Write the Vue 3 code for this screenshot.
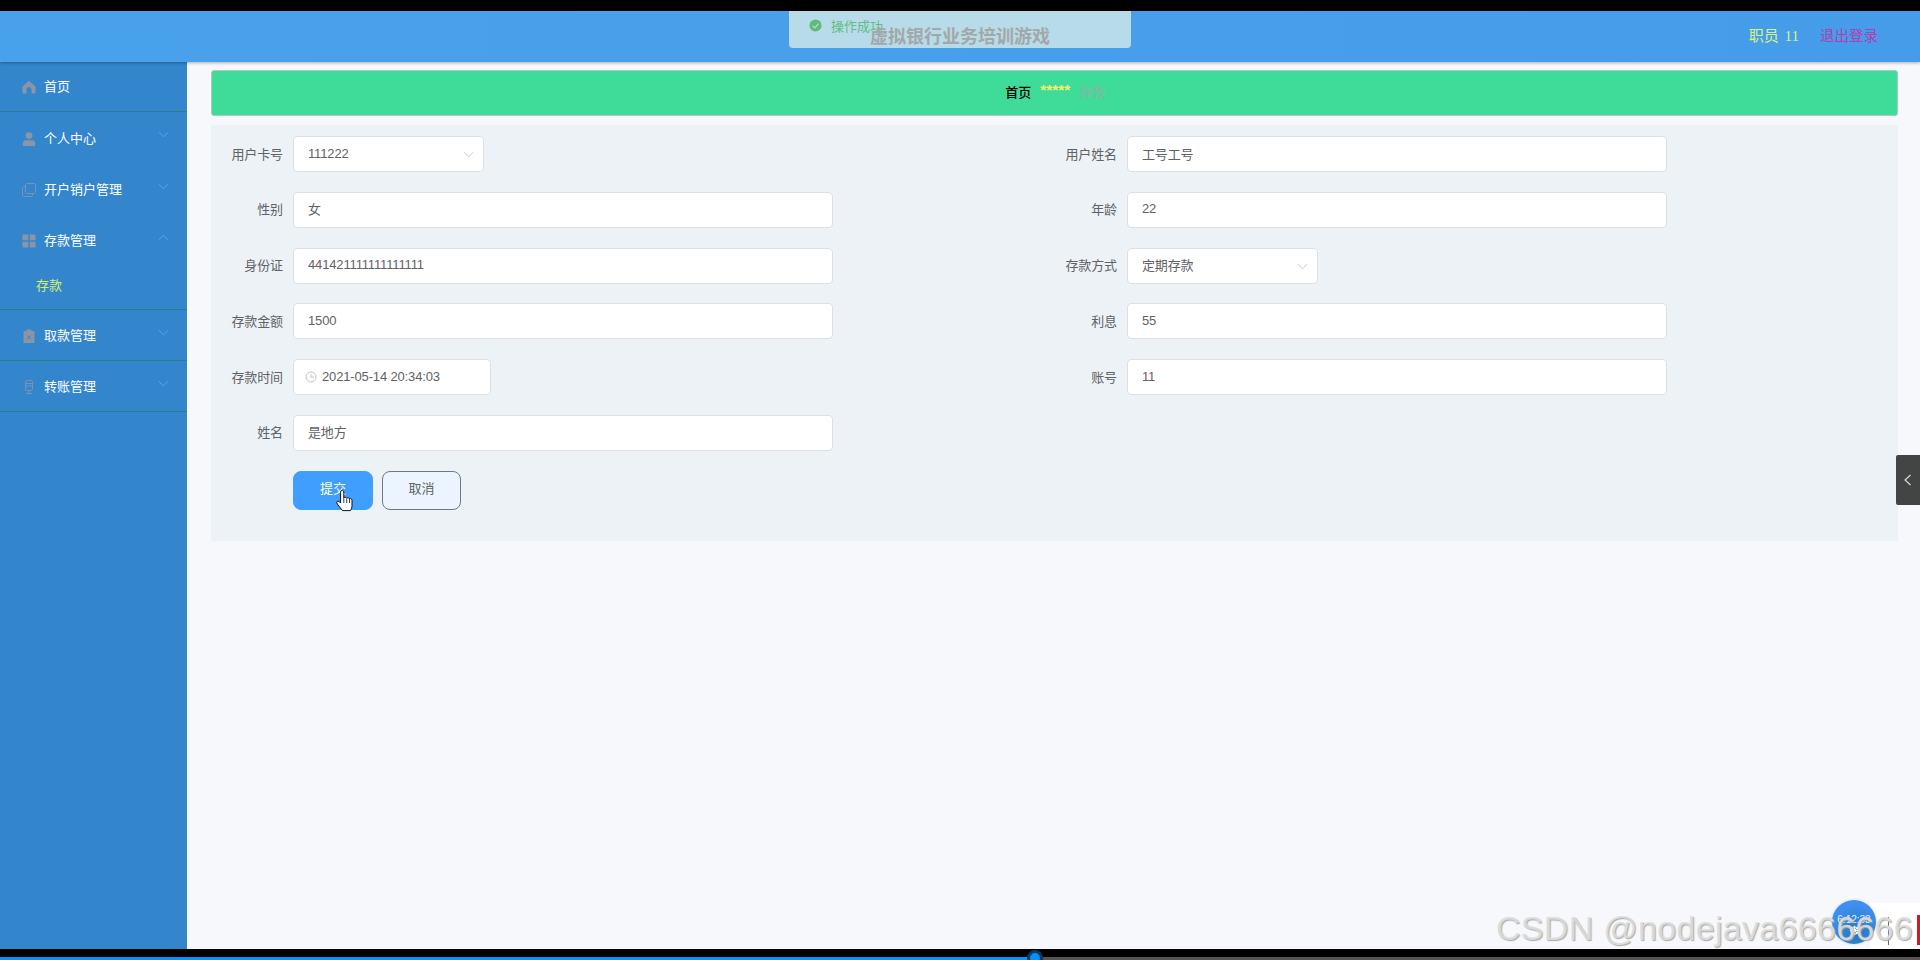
<script setup>
const chevron = 'M2 4.5 L7 9.5 L12 4.5'
const menu = [
  { key: 'home', label: '首页', cls: 'first', line: true },
  { key: 'user', label: '个人中心', arrow: 'down', cls: 'a' },
  { key: 'copy', label: '开户销户管理', arrow: 'down', cls: 'b' },
  { key: 'grid', label: '存款管理', arrow: 'up', cls: 'b' },
  { key: 'sub', label: '存款', cls: 'sub', line: true },
  { key: 'clip', label: '取款管理', arrow: 'down', cls: 'b', line: true },
  { key: 'mic', label: '转账管理', arrow: 'down', cls: 'b', line: true }
]
const rows = [
  [{ label: '用户卡号', value: '111222', type: 'select' }, { label: '用户姓名', value: '工号工号' }],
  [{ label: '性别', value: '女' }, { label: '年龄', value: '22' }],
  [{ label: '身份证', value: '441421111111111111' }, { label: '存款方式', value: '定期存款', type: 'select' }],
  [{ label: '存款金额', value: '1500' }, { label: '利息', value: '55' }],
  [{ label: '存款时间', value: '2021-05-14 20:34:03', type: 'date' }, { label: '账号', value: '11' }],
  [{ label: '姓名', value: '是地方' }, null]
]
</script>

<template>
  <div class="screen">
    <div class="black-top"></div>
    <header class="topbar">
      <div class="title">虚拟银行业务培训游戏</div>
      <div class="user">
        <span class="staff">职员 11</span>
        <span class="logout">退出登录</span>
      </div>
    </header>
    <div class="middle">
      <aside class="side">
        <div v-for="m in menu" :key="m.key" class="item" :class="[m.cls, { line: m.line }]">
          <svg v-if="m.key === 'home'" class="ico" viewBox="0 0 14 14"><path d="M7 .8 13.500 6.500V13.500H9.500V9.500A2.500 2.500 0 0 0 4.500 9.500V13.500H.5V6.500z" fill="#8b95a5" /></svg>
          <svg v-else-if="m.key === 'user'" class="ico" viewBox="0 0 14 14"><circle cx="7" cy="3.600" r="3.400" fill="#8b95a5" /><path d="M.8 14v-2.400C.8 9.500 2.200 8.300 4 8.300h6c1.800 0 3.200 1.200 3.200 3.300V14z" fill="#8b95a5" /></svg>
          <svg v-else-if="m.key === 'copy'" class="ico" viewBox="0 0 14 14" fill="none" stroke="#7b92b2" stroke-width="1"><rect x="3.500" y=".5" width="10" height="10" rx="1" /><path d="M3 3.500H1.500a1 1 0 0 0-1 1v8a1 1 0 0 0 1 1h8a1 1 0 0 0 1-1V11" /></svg>
          <svg v-else-if="m.key === 'grid'" class="ico" viewBox="0 0 14 14" fill="#8b95a5"><rect x=".5" y=".5" width="5.800" height="5.800" /><rect x="7.700" y=".5" width="5.800" height="5.800" /><rect x=".5" y="7.700" width="5.800" height="5.800" /><rect x="7.700" y="7.700" width="5.800" height="5.800" /></svg>
          <svg v-else-if="m.key === 'clip'" class="ico" viewBox="0 0 14 14"><path d="M1.500 2H4.500V.5H9.500V2H12.500V14H1.500z" fill="#8b95a5" /><path d="M5 6.500 9 10.500M9 6.500 5 10.500" stroke="#3385cc" stroke-width="1" /></svg>
          <svg v-else-if="m.key === 'mic'" class="ico" viewBox="0 0 14 14" fill="none" stroke="#7b92b2" stroke-width="1"><rect x="3.500" y=".5" width="7" height="10" rx="1.500" /><path d="M3.500 3.500h7M3.500 6h7M7 10.500v2.500M4 13.500h6" /></svg>
          <span class="label">{{ m.label }}</span>
          <svg v-if="m.arrow" class="chev" :class="m.arrow" viewBox="0 0 14 14" fill="none" stroke="#6fa5d8" stroke-width="1"><path :d="chevron" /></svg>
        </div>
      </aside>
      <main class="content">
        <div class="crumb">
          <span class="crumb-home">首页</span>
          <span class="stars">*****</span>
          <span class="crumb-cur">存款</span>
        </div>
        <section class="panel">
          <div class="grid">
            <template v-for="(row, i) in rows" :key="i">
              <div v-for="(f, j) in row" :key="j" class="field">
                <template v-if="f">
                  <label class="flabel">{{ f.label }}</label>
                  <div class="box" :class="f.type">
                    <svg v-if="f.type === 'date'" class="clock" viewBox="0 0 14 14" fill="none" stroke="#c0c4cc" stroke-width="1"><circle cx="7" cy="7" r="5" /><path d="M7 3.800V7H10" /></svg>
                    <span>{{ f.value }}</span>
                    <svg v-if="f.type === 'select'" class="sel-arrow" viewBox="0 0 14 14" fill="none" stroke="#c0c4cc" stroke-width="1"><path :d="chevron" /></svg>
                  </div>
                </template>
              </div>
            </template>
          </div>
          <div class="actions">
            <button class="btn primary">提交</button>
            <button class="btn plain">取消</button>
          </div>
        </section>
      </main>
    </div>
    <div class="black-bottom"></div>
    <div class="progress"><div class="played"></div><div class="rest"></div></div>

    <div class="toast">
      <svg class="ok" viewBox="0 0 14 14"><circle cx="7" cy="7" r="6.500" fill="#5fbb78" /><path d="M3.800 7.200 6.200 9.500 10.300 5" fill="none" stroke="#b6dbeb" stroke-width="1.300" /></svg>
      <span>操作成功</span>
    </div>
    <div class="drawer">
      <svg viewBox="0 0 10 14" fill="none" stroke="#d8d8d8" stroke-width="1.200"><path d="M7.500 2 2 7l5.500 5" /></svg>
    </div>
    <svg class="hand" viewBox="0 0 18 24">
      <path d="M5 1.800c1-.9 2.600-.4 2.800 1V9c.5-1 2.500-1 2.900.200.800-.8 2.500-.6 2.800.600.900-.5 2.400 0 2.500 1.300v5.500c0 2-.8 3.500-1.500 5H6.500C5 19.500 2 16.500.8 14c-.6-1.300 1-2.500 2.200-1.600L4.600 14V3z" fill="#fff" stroke="#111" stroke-width="1" stroke-linejoin="round" />
      <path d="M7.800 9v5M10.700 9.500V14M13.500 10v4" stroke="#111" stroke-width=".8" />
    </svg>
    <div class="float-strip"><i class="strip-line"></i><i class="strip-red"></i></div>
    <div class="float-ball">
      <span class="ball-time">6:12:33</span>
      <svg class="ball-flower" viewBox="0 0 14 14" fill="none" stroke="#fff" stroke-width="1.400"><circle cx="7" cy="7" r="4.500" /><path d="M7 1v12M1 7h12M3 3l8 8M11 3l-8 8" /></svg>
    </div>
    <div class="mark">CSDN @nodejava6666666</div>
    <div class="knob"></div>
  </div>
</template>

<style>
html, body { margin: 0; padding: 0; background: #000; }
</style>

<style scoped>
.screen {
  position: relative;
  width: 1920px;
  height: 960px;
  overflow: hidden;
  display: flex;
  flex-direction: column;
  background: #000;
  font-family: "Liberation Sans", "Noto Sans CJK SC", sans-serif;
  font-size: 13px;
}
.black-top { height: 11px; flex: none; }
.topbar {
  position: relative;
  height: 51px;
  flex: none;
  display: flex;
  align-items: center;
  justify-content: center;
  background: linear-gradient(90deg, #4aa1eb, #459ce9);
  box-shadow: 0 1px 3px rgba(0, 0, 0, .3);
}
.title {
  position: relative;
  z-index: 3;
  font-size: 18px;
  line-height: 24px;
  font-weight: 700;
  color: #a2a8a8;
}
.user {
  position: absolute;
  right: 42px;
  top: 15px;
  display: flex;
  gap: 21px;
  line-height: 20px;
  font-family: "Liberation Serif", "Noto Sans CJK SC", serif;
}
.staff { color: #d9f283; font-size: 15px; word-spacing: 2px; }
.logout { color: #b23db0; font-size: 14.500px; }
.middle { flex: 1; display: flex; min-height: 0; background: #f6f8fc; }
.side { width: 187px; flex: none; background: #3385cc; }
.item {
  position: relative;
  box-sizing: border-box;
  display: flex;
  align-items: center;
  padding-left: 22px;
  color: #fff;
  font-size: 13px;
}
.item.first { height: 50px; }
.item.a { height: 52px; }
.item.b { height: 51px; }
.item.sub { height: 44px; padding-left: 36px; padding-bottom: 4px; color: #d4ef70; }
.item.line { border-bottom: 1px solid #2f7c88; }
.label { padding-bottom: 2px; }
.ico { width: 14px; height: 14px; margin-right: 8px; margin-top: 1px; flex: none; }
.chev { position: absolute; right: 17px; top: 16px; width: 13px; height: 13px; }
.chev.up { transform: rotate(180deg); }
.content { flex: 1; min-width: 0; padding: 8px 22px 0 24px; }
.crumb {
  box-sizing: border-box;
  margin-left: -0.5px;
  height: 46px;
  display: flex;
  align-items: center;
  justify-content: center;
  gap: 9px;
  background: #3fdb98;
  border: 1px solid #a8cdbd;
  border-radius: 3px;
  padding-bottom: 3px;
  padding-left: 2px;
}
.crumb-home { color: #000; font-weight: 500; }
.stars { color: #f3ef6d; font-size: 15.500px; line-height: 10px; font-weight: 700; margin-top: -3px; }
.crumb-cur { color: #86b5a8; }
.panel {
  box-sizing: border-box;
  margin-top: 9px;
  height: 416px;
  padding: 11px 9.5px 0;
  background: #edf2f6;
}
.grid { display: grid; grid-template-columns: 1fr 1fr; row-gap: 19.800px; }
.field { display: flex; height: 36px; align-items: center; }
.flabel {
  box-sizing: border-box;
  width: 82.500px;
  margin-left: -10px;
  padding: 0 10px 2px 0;
  text-align: right;
  color: #606266;
  white-space: nowrap;
  flex: none;
  letter-spacing: -0.1px;
}
.box {
  position: relative;
  box-sizing: border-box;
  width: 540px;
  height: 36px;
  display: flex;
  align-items: center;
  padding: 0 14px 2px;
  background: #fff;
  border: 1px solid #dcdfe6;
  border-radius: 4px;
  color: #606266;
  letter-spacing: -0.15px;
}
.box.select { width: 191px; }
.box.date { width: 198px; padding-left: 10px; }
.clock { width: 14px; height: 14px; margin: 2px 4px 0 0; flex: none; }
.sel-arrow { position: absolute; right: 8px; top: 11px; width: 13px; height: 13px; }
.actions { display: flex; gap: 9px; padding-left: 72.500px; margin-top: 20px; }
.btn {
  box-sizing: border-box;
  width: 80px;
  height: 39px;
  border-radius: 8px;
  font: inherit;
  padding: 0 0 5px;
}
.primary { background: #409eff; border: 1px solid #409eff; color: #fff; }
.plain { width: 79px; background: #ecf5ff; border: 1px solid #6d7885; color: #606266; }
.black-bottom { height: 8px; flex: none; }
.progress { height: 3px; flex: none; display: flex; }
.played { width: 1035px; background: #0096ff; }
.rest { flex: 1; background: #555; }
.knob {
  position: absolute;
  left: 1027px;
  top: 950px;
  width: 16px;
  height: 16px;
  box-sizing: border-box;
  border-radius: 50%;
  background: #0090f8;
  border: 3px solid #0a3a63;
}
.toast {
  position: absolute;
  left: 789px;
  top: 11px;
  width: 342px;
  height: 37px;
  box-sizing: border-box;
  padding: 0 0 8px 20px;
  display: flex;
  align-items: center;
  gap: 9px;
  background: rgba(190, 222, 233, .95);
  border-radius: 0 0 4px 4px;
  color: #62bd82;
}
.ok { width: 13px; height: 13px; flex: none; }
.drawer {
  position: absolute;
  left: 1896px;
  top: 455px;
  width: 24px;
  height: 50px;
  display: flex;
  align-items: center;
  justify-content: center;
  background: #434545;
  border-radius: 2px 0 0 2px;
}
.drawer svg { width: 10px; height: 14px; }
.hand { position: absolute; left: 336px; top: 488px; width: 18px; height: 26px; }
.float-strip { position: absolute; left: 1870px; top: 903px; width: 50px; height: 46px; background: #fff; }
.strip-line { position: absolute; left: 18px; top: 14px; width: 1px; height: 28px; background: #666; }
.strip-red { position: absolute; left: 47px; top: 12px; width: 3px; height: 30px; background: #d0182a; }
.float-ball {
  position: absolute;
  left: 1832px;
  top: 900px;
  width: 44px;
  height: 44px;
  border-radius: 50%;
  background: radial-gradient(circle at 55% 75%, #2478bb, #3f8ff0 70%);
  box-shadow: 0 0 3px #bcd8f8;
  overflow: hidden;
  display: flex;
  flex-direction: column;
  align-items: center;
  padding-top: 14px;
  box-sizing: border-box;
}
.ball-time { color: #e8f3ff; font-size: 10px; line-height: 11px; }
.ball-flower { width: 11px; height: 11px; }
.mark {
  position: absolute;
  left: 1496px;
  top: 909px;
  font-family: "Liberation Sans", sans-serif;
  font-size: 34px;
  line-height: 38px;
  letter-spacing: .3px;
  white-space: nowrap;
  color: rgba(222, 222, 222, .9);
  text-shadow: 1px 1px 1px #aaa;
}
</style>
